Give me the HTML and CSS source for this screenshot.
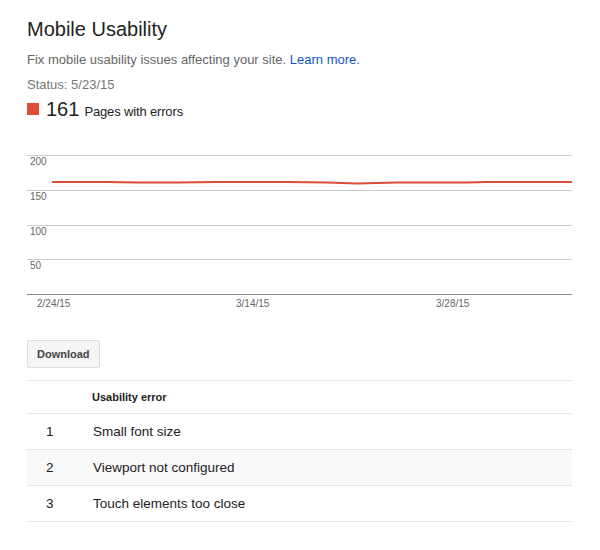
FILE: index.html
```html
<!DOCTYPE html>
<html>
<head>
<meta charset="utf-8">
<link rel="stylesheet" href="styles.css">
</head>
<body>
<div class="page">
  <h1 class="title">Mobile Usability</h1>
  <p class="intro">Fix mobile usability issues affecting your site. <a class="link" href="#">Learn more.</a></p>
  <p class="status">Status: 5/23/15</p>
  <div class="metric">
    <span class="swatch"></span>
    <span class="count">161</span>
    <span class="metric-label">Pages with errors</span>
  </div>
  <div class="chart">
    <svg class="chart-svg" width="545" height="160" viewBox="0 0 545 160">
      <g class="grid">
        <line x1="0" y1="5.5" x2="545" y2="5.5"/>
        <line x1="0" y1="40.5" x2="545" y2="40.5"/>
        <line x1="0" y1="75.5" x2="545" y2="75.5"/>
        <line x1="0" y1="109.5" x2="545" y2="109.5"/>
      </g>
      <line class="axis" x1="0" y1="144.5" x2="545" y2="144.5"/>
      <g class="ylab">
        <text x="3" y="15">200</text>
        <text x="3" y="50">150</text>
        <text x="3" y="85">100</text>
        <text x="3" y="119">50</text>
      </g>
      <polyline class="series" points="25,32 80,32 110,32.5 150,32.5 190,32 260,32 300,32.5 330,33.5 370,32.5 440,32.5 460,32 545,32"/>
      <g class="xlab">
        <text x="10" y="157">2/24/15</text>
        <text x="209" y="157">3/14/15</text>
        <text x="409" y="157">3/28/15</text>
      </g>
    </svg>
  </div>
  <button class="btn">Download</button>
  <table class="errors">
    <thead>
      <tr><th class="num"></th><th class="name">Usability error</th></tr>
    </thead>
    <tbody>
      <tr><td class="num">1</td><td class="name">Small font size</td></tr>
      <tr class="alt"><td class="num">2</td><td class="name">Viewport not configured</td></tr>
      <tr><td class="num">3</td><td class="name">Touch elements too close</td></tr>
    </tbody>
  </table>
</div>
</body>
</html>
```

FILE: styles.css
```css
html, body {
  margin: 0;
  padding: 0;
  background: #fff;
}
body {
  font-family: Arial, "Liberation Sans", sans-serif;
  color: #222;
}
.page {
  width: 545px;
  padding: 17px 0 0 27px;
}
.title {
  margin: 0;
  font-size: 20px;
  line-height: 24px;
  font-weight: normal;
  color: #222;
}
.intro {
  margin: 11px 0 0 0;
  font-size: 13px;
  line-height: 16px;
  color: #666;
}
.link {
  color: #1155cc;
  text-decoration: none;
}
.status {
  margin: 9px 0 0 0;
  font-size: 13px;
  line-height: 16px;
  color: #777;
}
.metric {
  margin-top: 4px;
  display: flex;
  align-items: baseline;
  height: 24px;
}
.swatch {
  display: inline-block;
  width: 12px;
  height: 12px;
  background: #dd4b39;
  margin-right: 7px;
  align-self: center;
}
.count {
  font-size: 20px;
  line-height: 24px;
  color: #222;
  margin-right: 5px;
}
.metric-label {
  font-size: 13px;
  letter-spacing: -0.15px;
  color: #222;
}
.chart {
  margin-top: 29px;
  height: 160px;
}
.chart-svg {
  display: block;
}
.grid line {
  stroke: #cccccc;
  stroke-width: 1;
}
.axis {
  stroke: #888888;
  stroke-width: 1;
}
.ylab text, .xlab text {
  font-family: Arial, "Liberation Sans", sans-serif;
  font-size: 10px;
  fill: #666;
}
.series {
  fill: none;
  stroke: #dd4b39;
  stroke-width: 2;
}
.btn {
  display: block;
  margin-top: 30px;
  height: 28px;
  padding: 0 9px;
  border: 1px solid #dcdcdc;
  border-radius: 2px;
  background: #f5f5f5;
  font-family: Arial, "Liberation Sans", sans-serif;
  font-size: 11px;
  font-weight: bold;
  color: #444;
}
.errors {
  margin-top: 12px;
  width: 545px;
  border-collapse: collapse;
  border-top: 1px solid #e5e5e5;
}
.errors th, .errors td {
  padding: 0;
  text-align: left;
  border-bottom: 1px solid #e5e5e5;
}
.errors th {
  height: 32px;
  font-size: 11px;
  font-weight: bold;
  color: #222;
}
.errors td {
  height: 35px;
  font-size: 13.5px;
  color: #222;
}
.errors td.name {
  padding-left: 1px;
}
.errors .num {
  width: 46px;
  padding-left: 19px;
}
.errors .alt td {
  background: #f9f9f9;
}
```
